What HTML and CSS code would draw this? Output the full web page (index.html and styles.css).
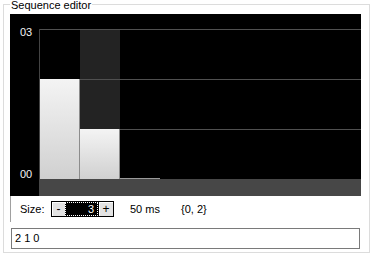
FILE: index.html
```html
<!DOCTYPE html>
<html>
<head>
<meta charset="utf-8">
<link rel="stylesheet" href="styles.css">
</head>
<body>
<div class="group">
  <div class="legend">Sequence editor</div>
  <div class="chart">
    <div class="axis"><span>03</span><span>00</span></div>
    <div class="plot">
      <div class="grid">
        <div class="col"><div class="bar" style="height:100px"></div></div>
        <div class="col sel"><div class="bar" style="height:50px"></div></div>
        <div class="col"><div class="bar zero"></div></div>
      </div>
      <div class="track"></div>
    </div>
  </div>
  <div class="controls">
    <span class="size-label">Size:</span>
    <div class="spin">
      <span class="btn">-</span>
      <span class="field">3</span>
      <span class="btn plus">+</span>
    </div>
    <span class="ms">50 ms</span>
    <span class="set">{0, 2}</span>
  </div>
  <div class="text">2 1 0</div>
</div>
</body>
</html>
```
FILE: styles.css
```css
body {
  margin: 0;
  background: #fff;
  font: 11px "Liberation Sans", Arial, sans-serif;
  color: #000;
}
.group {
  margin: 4px 0 0 3px;
  width: 367px;
  height: 249px;
  box-sizing: border-box;
  border: 1px solid #dcdcdc;
  padding: 0 0 0 6px;
}
.legend {
  width: max-content;
  margin: -5px 0 0 0;
  padding: 0 1px;
  background: #fff;
  line-height: 11px;
}
.chart {
  margin-top: 3px;
  width: 351px;
  height: 182px;
  background: #000;
  display: flex;
}
.axis {
  width: 29px;
  box-sizing: border-box;
  padding: 13px 0 16px 10px;
  display: flex;
  flex-direction: column;
  justify-content: space-between;
  color: #f4f4f4;
  line-height: 11px;
}
.plot {
  width: 322px;
  padding-top: 15px;
  display: flex;
  flex-direction: column;
}
.grid {
  height: 150px;
  border-left: 1px solid #444;
  display: flex;
  align-items: flex-end;
  background: repeating-linear-gradient(to bottom, #505050 0 1px, transparent 1px 50px);
}
.col {
  width: 40px;
  height: 100%;
  display: flex;
  align-items: flex-end;
}
.col.sel {
  background: repeating-linear-gradient(to bottom, #505050 0 1px, transparent 1px 50px), #232323;
}
.bar {
  width: 39px;
  border-right: 1px solid #8c8c8c;
  background: linear-gradient(to bottom, #f4f4f4, #d0d0d0);
}
.bar.zero {
  width: 40px;
  height: 1px;
  border: 0;
  background: #9a9a9a;
}
.track {
  height: 17px;
  background: #474747;
}
.controls {
  height: 26px;
  border-left: 1px solid #a0a0a0;
  padding-left: 9px;
  display: flex;
  align-items: center;
}
.size-label {
  width: 31px;
}
.spin {
  display: flex;
  width: 63px;
  height: 16px;
  box-sizing: border-box;
  border: 1px solid #000;
  background: #000;
}
.btn {
  width: 13px;
  background: #e3e3e3;
  box-shadow: inset 1px 1px #fff;
  text-align: center;
  line-height: 14px;
  font-size: 12px;
}
.btn.plus {
  width: 14px;
  margin-left: 1px;
}
.field {
  width: 33px;
  box-sizing: border-box;
  border: 1px dotted #fff;
  color: #fff;
  text-align: right;
  padding-right: 3px;
  line-height: 12px;
}
.ms {
  margin-left: 16px;
  width: 51px;
}
.text {
  margin: 6px 0 0 1px;
  width: 349px;
  height: 21px;
  box-sizing: border-box;
  border: 1px solid #7a7a7a;
  padding-left: 3px;
  line-height: 19px;
}
```
